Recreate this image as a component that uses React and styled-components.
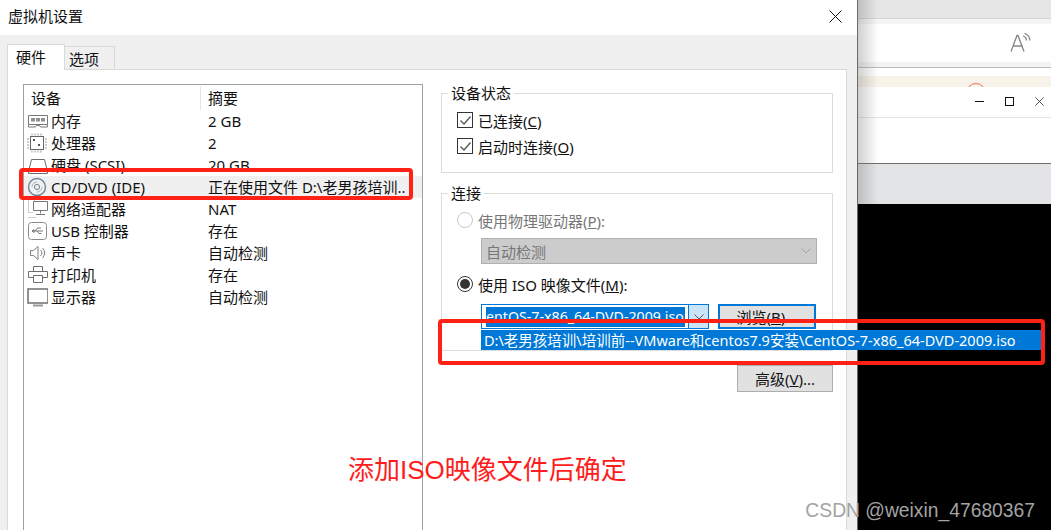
import React from "react";
import styled, { createGlobalStyle } from "styled-components";

const UI_FONT = `"Noto Sans", "Noto Sans CJK SC", sans-serif`;

const devices = [
  { icon: "memory", name: "内存", summary: "2 GB" },
  { icon: "cpu", name: "处理器", summary: "2" },
  { icon: "disk", name: "硬盘 (SCSI)", summary: "20 GB" },
  { icon: "disc", name: "CD/DVD (IDE)", summary: "正在使用文件 D:\\老男孩培训..", selected: true },
  { icon: "network", name: "网络适配器", summary: "NAT" },
  { icon: "usb", name: "USB 控制器", summary: "存在" },
  { icon: "sound", name: "声卡", summary: "自动检测" },
  { icon: "printer", name: "打印机", summary: "存在" },
  { icon: "monitor", name: "显示器", summary: "自动检测" },
];

function DeviceIcon({ type }) {
  return (
    <svg width="24" height="22" viewBox="0 0 24 22" fill="none" stroke="#7d7d7d" strokeWidth="1">
      {type === "memory" && (
        <>
          <path d="M4.5 5.500h19v9h-19zM4.500 14.500v2.500h7l1-1.500h3l1 1.500h7v-2.500" stroke="#777" />
          <path d="M7 8h4v3.500H7zM12 8h4v3.500h-4zM17 8h4v3.500h-4z" fill="#8f8f8f" stroke="none" />
        </>
      )}
      {type === "cpu" && (
        <>
          <rect x="6.500" y="4.500" width="13" height="13" stroke="#666" />
          <path d="M3 7h2M3 10h2M3 13h2M3 16h2M21 7h2M21 10h2M21 13h2M21 16h2M8 1.500v2M11 1.500v2M14 1.500v2M17 1.500v2M8 18.500v2M11 18.500v2M14 18.500v2M17 18.500v2" stroke="#999" />
          <path d="M9 7h2v2H9zM14 12h2v2h-2z" fill="#555" stroke="none" />
        </>
      )}
      {type === "disk" && <path d="M7.500 5.500h13l3 12v2h-19v-2zM4.500 17.500h19" stroke="#6e6e6e" />}
      {type === "disc" && (
        <>
          <circle cx="13" cy="11" r="8.500" stroke="#6d8296" strokeWidth="1.400" />
          <circle cx="13" cy="11" r="2.600" stroke="#6d8296" />
          <path d="M8 11a5 5 0 0 1 5-5M18 11a5 5 0 0 1-5 5" stroke="#a9b7c3" />
        </>
      )}
      {type === "network" && (
        <>
          <path d="M9.500 3.500h14v9h-14zM16.500 12.500v3M12 16.500h9" stroke="#777" />
          <path d="M4.500 1.500h6v2M4.500 1.500v13h5M4.500 19.500h7" strokeDasharray="1 1" stroke="#999" />
        </>
      )}
      {type === "usb" && (
        <>
          <rect x="4.500" y="2.500" width="18" height="17" rx="3" stroke="#8a8a8a" />
          <path d="M8 11h11M11 11l2.500-3H17M13 11l2 2.500h2.500M8 11l2-1.500v3z" stroke="#777" />
        </>
      )}
      {type === "sound" && (
        <path d="M6.500 8.500h3l4.500-4v13l-4.500-4h-3zM16.500 8a4 4 0 0 1 0 6M18.500 6a7 7 0 0 1 0 10" stroke="#808080" />
      )}
      {type === "printer" && (
        <>
          <path d="M9.500 7.500v-5h9v5M9.500 13.500h-5v-6h19v6h-5" stroke="#6e6e6e" />
          <path d="M9.500 11.500h9v7h-9z" stroke="#6e6e6e" />
        </>
      )}
      {type === "monitor" && (
        <>
          <rect x="4" y="3" width="20" height="14" stroke="#777" strokeWidth="1.600" />
          <path d="M9 19.500h10" stroke="#999" strokeWidth="2" />
        </>
      )}
    </svg>
  );
}

function CloseGlyph({ size = 13, strokeWidth = 1 }) {
  return (
    <svg width={size} height={size} viewBox="0 0 13 13" stroke="#111" strokeWidth={strokeWidth} fill="none">
      <path d="M0.500 0.500l12 12M12.500 0.500l-12 12" />
    </svg>
  );
}

function Chevron({ color = "#7a7a7a" }) {
  return (
    <svg width="10" height="6" viewBox="0 0 10 6" fill="none" stroke={color}>
      <path d="M0.500 0.500L5 5l4.500-4.500" />
    </svg>
  );
}

function CheckRow({ label, hotkey }) {
  return (
    <OptionRow>
      <CheckBox>
        <svg width="11" height="9" viewBox="0 0 11 9" fill="none" stroke="#555" strokeWidth="1.300">
          <path d="M0.500 4.500L4 8l6.500-7.500" />
        </svg>
      </CheckBox>
      <span>
        {label}(<u>{hotkey}</u>)
      </span>
    </OptionRow>
  );
}

export default function App() {
  return (
    <>
      <GlobalStyle />
      <Screen>
        <Dialog>
          <TitleBar>
            <span>虚拟机设置</span>
            <CloseGlyph size={13} />
          </TitleBar>
          <DialogBody>
            <Tabs>
              <Tab $active>硬件</Tab>
              <Tab>选项</Tab>
            </Tabs>
            <TabPanel>
              <DeviceList>
                <DeviceHeader>
                  <span>设备</span>
                  <span>摘要</span>
                </DeviceHeader>
                {devices.map((d) => (
                  <DeviceRow key={d.icon} $selected={d.selected}>
                    <DeviceIcon type={d.icon} />
                    <DeviceName>{d.name}</DeviceName>
                    <span>{d.summary}</span>
                  </DeviceRow>
                ))}
              </DeviceList>
              <Settings>
                <Group $height={80} $gap={20}>
                  <Legend>设备状态</Legend>
                  <CheckRow label="已连接" hotkey="C" />
                  <CheckRow label="启动时连接" hotkey="O" />
                </Group>
                <Group $height={158} $gap={14}>
                  <Legend>连接</Legend>
                  <OptionRow $disabled>
                    <Radio $disabled />
                    <span>
                      使用物理驱动器(<u>P</u>):
                    </span>
                  </OptionRow>
                  <DisabledSelect>
                    <span>自动检测</span>
                    <Chevron color="#a5a5a5" />
                  </DisabledSelect>
                  <IsoRow>
                    <Radio $checked />
                    <span>
                      使用 ISO 映像文件(<u>M</u>):
                    </span>
                  </IsoRow>
                  <ComboRow>
                    <Combo>
                      <ComboText>
                        <ComboSelection>entOS-7-x86_64-DVD-2009.iso</ComboSelection>
                      </ComboText>
                      <ComboArrow>
                        <Chevron color="#555" />
                      </ComboArrow>
                    </Combo>
                    <BrowseButton>
                      浏览(<u>B</u>)...
                    </BrowseButton>
                  </ComboRow>
                </Group>
                <ButtonRow>
                  <PlainButton>
                    高级(<u>V</u>)...
                  </PlainButton>
                </ButtonRow>
              </Settings>
            </TabPanel>
          </DialogBody>
          <PathPopup>D:\老男孩培训\培训前--VMware和centos7.9安装\CentOS-7-x86_64-DVD-2009.iso</PathPopup>
        </Dialog>

        <BackWindow>
          <Strip $height={18} $bg="#e6e6e6" />
          <Strip $height={6} $bg="#f4f4f4" $top="#d4d4d4" />
          <ReaderBar>
            <svg width="21" height="20" viewBox="0 0 21 20" fill="none" stroke="#858585" strokeWidth="1.300">
              <path d="M1 18.500L7 2.500h1L14 18.500M3.200 13h9.600" />
              <path d="M13 3a5 5 0 0 1 3.500 4.500M14.500 0.500a8 8 0 0 1 5.500 7" />
            </svg>
          </ReaderBar>
          <Strip $height={5} $bg="#f3f3f3" />
          <Strip $height={9} $bg="#ffffff" $top="#bbbbbb" />
          <NoticeStrip>
            <NoticeArc $right={65} />
            <NoticeArc $right={-18} />
          </NoticeStrip>
          <WindowBar>
            <svg width="9" height="1" viewBox="0 0 9 1" stroke="#111">
              <path d="M0 0.500h9" />
            </svg>
            <MaxGlyph />
            <CloseGlyph size={9} />
          </WindowBar>
          <Strip $height={46} $bg="#ffffff" $top="#e3e3e3" />
          <Strip $height={41} $bg="#e3e4e6" $top="#6f6f6f" />
          <BlackArea />
          <EdgeShadow />
        </BackWindow>

        <RedBox $variant="device" />
        <RedBox $variant="path" />
        <Annotation>添加ISO映像文件后确定</Annotation>
        <Watermark>CSDN @weixin_47680367</Watermark>
      </Screen>
    </>
  );
}

const GlobalStyle = createGlobalStyle`
  html, body {
    margin: 0;
    padding: 0;
    background: #fff;
  }
  * {
    box-sizing: border-box;
  }
`;

const Screen = styled.div`
  position: relative;
  display: flex;
  width: 1051px;
  height: 530px;
  overflow: hidden;
  font-family: ${UI_FONT};
  font-size: 15px;
  color: #111;
`;

const Dialog = styled.div`
  position: relative;
  flex: 0 0 858px;
  display: flex;
  flex-direction: column;
  border-right: 1px solid #6a6a6a;
  background: #f0f0f0;
`;

const TitleBar = styled.div`
  flex: 0 0 35px;
  display: flex;
  justify-content: space-between;
  align-items: center;
  padding: 0 15px 3px 8px;
  background: #fff;
  line-height: 20px;
`;

const DialogBody = styled.div`
  flex: 1;
  display: flex;
  flex-direction: column;
  min-height: 0;
  padding: 9px 10px 0 7px;
`;

const Tabs = styled.div`
  display: flex;
  align-items: flex-end;
  height: 26px;
  position: relative;
  z-index: 1;
  margin-bottom: -1px;
`;

const Tab = styled.div`
  display: flex;
  align-items: center;
  border: 1px solid #d9d9d9;
  ${({ $active }) =>
    $active
      ? `width: 58px; height: 26px; padding: 0 0 3px 8px; background: #fff; border-bottom: 0;`
      : `width: 50px; height: 24px; padding: 0 0 0 4px; background: #f0f0f0; border-left: 0;`}
`;

const TabPanel = styled.div`
  flex: 1;
  display: flex;
  gap: 18px;
  min-height: 0;
  padding: 14px 13px 0 15px;
  background: #fff;
  border: 1px solid #d9d9d9;
  border-bottom: 0;
`;

const DeviceList = styled.div`
  flex: 0 0 400px;
  border: 1px solid #a0a0a0;
  border-bottom: 0;
  padding-top: 1px;
`;

const DeviceHeader = styled.div`
  display: grid;
  grid-template-columns: 177px 1fr;
  height: 24px;
  line-height: 24px;

  & span:first-child {
    padding-left: 7px;
    border-right: 1px solid #e5e5e5;
  }
  & span:last-child {
    padding-left: 7px;
  }
`;

const DeviceRow = styled.div`
  display: grid;
  grid-template-columns: 27px 150px 1fr;
  align-items: center;
  height: 22px;
  line-height: 22px;
  white-space: nowrap;
  background: ${({ $selected }) => ($selected ? "#f0f0f0" : "transparent")};

  & svg {
    display: block;
  }
  & > span:last-child {
    padding-left: 7px;
  }
`;

const DeviceName = styled.span`
  overflow: hidden;
`;

const Settings = styled.div`
  flex: 1;
  padding-top: 9px;
  min-width: 0;
`;

const Group = styled.div`
  position: relative;
  height: ${({ $height }) => $height}px;
  margin-bottom: ${({ $gap }) => $gap}px;
  padding: 13px 15px 0 15px;
  border: 1px solid #dcdcdc;
`;

const Legend = styled.div`
  position: absolute;
  top: -11px;
  left: 6px;
  padding: 0 3px;
  background: #fff;
  line-height: 20px;
`;

const OptionRow = styled.div`
  display: flex;
  align-items: center;
  gap: 5px;
  height: 26px;
  color: ${({ $disabled }) => ($disabled ? "#777" : "#111")};
`;

const CheckBox = styled.div`
  flex: 0 0 16px;
  height: 16px;
  display: flex;
  align-items: center;
  justify-content: center;
  border: 1px solid #333;
`;

const Radio = styled.div`
  flex: 0 0 16px;
  height: 16px;
  border-radius: 50%;
  border: 1px solid ${({ $disabled }) => ($disabled ? "#c8c8c8" : "#333")};
  display: flex;
  align-items: center;
  justify-content: center;

  &::after {
    content: "";
    display: ${({ $checked }) => ($checked ? "block" : "none")};
    width: 10px;
    height: 10px;
    border-radius: 50%;
    background: #333;
  }
`;

const DisabledSelect = styled.div`
  display: flex;
  justify-content: space-between;
  align-items: center;
  width: 336px;
  height: 26px;
  margin: 5px 0 0 24px;
  padding: 0 5px 0 4px;
  background: #cccccc;
  border: 1px solid #b0b0b0;
  color: #777;
`;

const IsoRow = styled(OptionRow)`
  margin-top: 7px;
`;

const ComboRow = styled.div`
  display: flex;
  gap: 9px;
  margin: 7px 0 0 24px;
  height: 25px;
`;

const Combo = styled.div`
  display: flex;
  width: 228px;
  border: 1px solid #0078d7;
  background: #fff;
`;

const ComboText = styled.div`
  flex: 1;
  min-width: 0;
  padding: 2px 3px 1px 4px;
  overflow: hidden;
`;

const ComboSelection = styled.div`
  height: 100%;
  background: #0078d7;
  color: #fff;
  line-height: 19px;
  font-size: 14.2px;
  white-space: nowrap;
`;

const ComboArrow = styled.div`
  flex: 0 0 20px;
  display: flex;
  align-items: center;
  justify-content: center;
  background: #cce4f7;
  border-left: 1px solid #0078d7;
`;

const BrowseButton = styled.div`
  width: 98px;
  display: flex;
  align-items: center;
  justify-content: center;
  background: #e1e1e1;
  border: 2px solid #0078d7;
`;

const ButtonRow = styled.div`
  display: flex;
  justify-content: flex-end;
`;

const PlainButton = styled.div`
  width: 96px;
  height: 27px;
  display: flex;
  align-items: center;
  justify-content: center;
  background: #e1e1e1;
  border: 1px solid #adadad;
`;

const PathPopup = styled.div`
  position: absolute;
  top: 330px;
  left: 481px;
  width: 560px;
  height: 20px;
  padding-left: 3px;
  background: #0078d7;
  color: #fff;
  line-height: 20px;
  font-size: 14.5px;
  white-space: nowrap;
  z-index: 2;
`;

const BackWindow = styled.div`
  position: relative;
  flex: 1;
  display: flex;
  flex-direction: column;
  min-width: 0;
`;

const Strip = styled.div`
  flex: 0 0 ${({ $height }) => $height}px;
  background: ${({ $bg }) => $bg};
  ${({ $top }) => $top && `border-top: 1px solid ${$top};`}
`;

const ReaderBar = styled.div`
  flex: 0 0 38px;
  display: flex;
  justify-content: flex-end;
  align-items: center;
  padding-right: 20px;
  background: #fff;
`;

const NoticeStrip = styled.div`
  position: relative;
  flex: 0 0 11px;
  overflow: hidden;
  background: #f8f3e9;
`;

const NoticeArc = styled.div`
  position: absolute;
  top: 7px;
  right: ${({ $right }) => $right}px;
  width: 20px;
  height: 20px;
  border-radius: 50%;
  border: 1px solid #f0695a;
`;

const WindowBar = styled.div`
  flex: 0 0 30px;
  display: flex;
  justify-content: flex-end;
  align-items: center;
  gap: 21px;
  padding: 0 7px 1px 0;
  background: #fff;

  & svg {
    display: block;
  }
`;

const MaxGlyph = styled.div`
  width: 9px;
  height: 9px;
  border: 1px solid #111;
`;

const BlackArea = styled.div`
  flex: 1;
  background: #000;
`;

const EdgeShadow = styled.div`
  position: absolute;
  top: 0;
  left: 0;
  width: 20px;
  height: 204px;
  background: linear-gradient(to right, rgba(120, 120, 120, 0.35), rgba(255, 255, 255, 0));
`;

const RedBox = styled.div`
  position: absolute;
  z-index: 3;
  border: 4px solid #ff2116;
  border-radius: 4px;
  ${({ $variant }) =>
    $variant === "device"
      ? `left: 19px; top: 168px; width: 394px; height: 32px;`
      : `left: 438px; top: 319px; width: 607px; height: 46px;`}
`;

const Annotation = styled.div`
  position: absolute;
  z-index: 3;
  left: 348px;
  top: 452px;
  font-family: "Liberation Sans", "Noto Sans CJK SC", sans-serif;
  font-size: 26px;
  line-height: 36px;
  color: #ff1c1c;
  white-space: nowrap;
`;

const Watermark = styled.div`
  position: absolute;
  z-index: 3;
  right: 16px;
  top: 499px;
  font-family: "Liberation Sans", Arial, sans-serif;
  font-size: 19.3px;
  line-height: 24px;
  color: #a3a3a3;
  white-space: nowrap;
`;
